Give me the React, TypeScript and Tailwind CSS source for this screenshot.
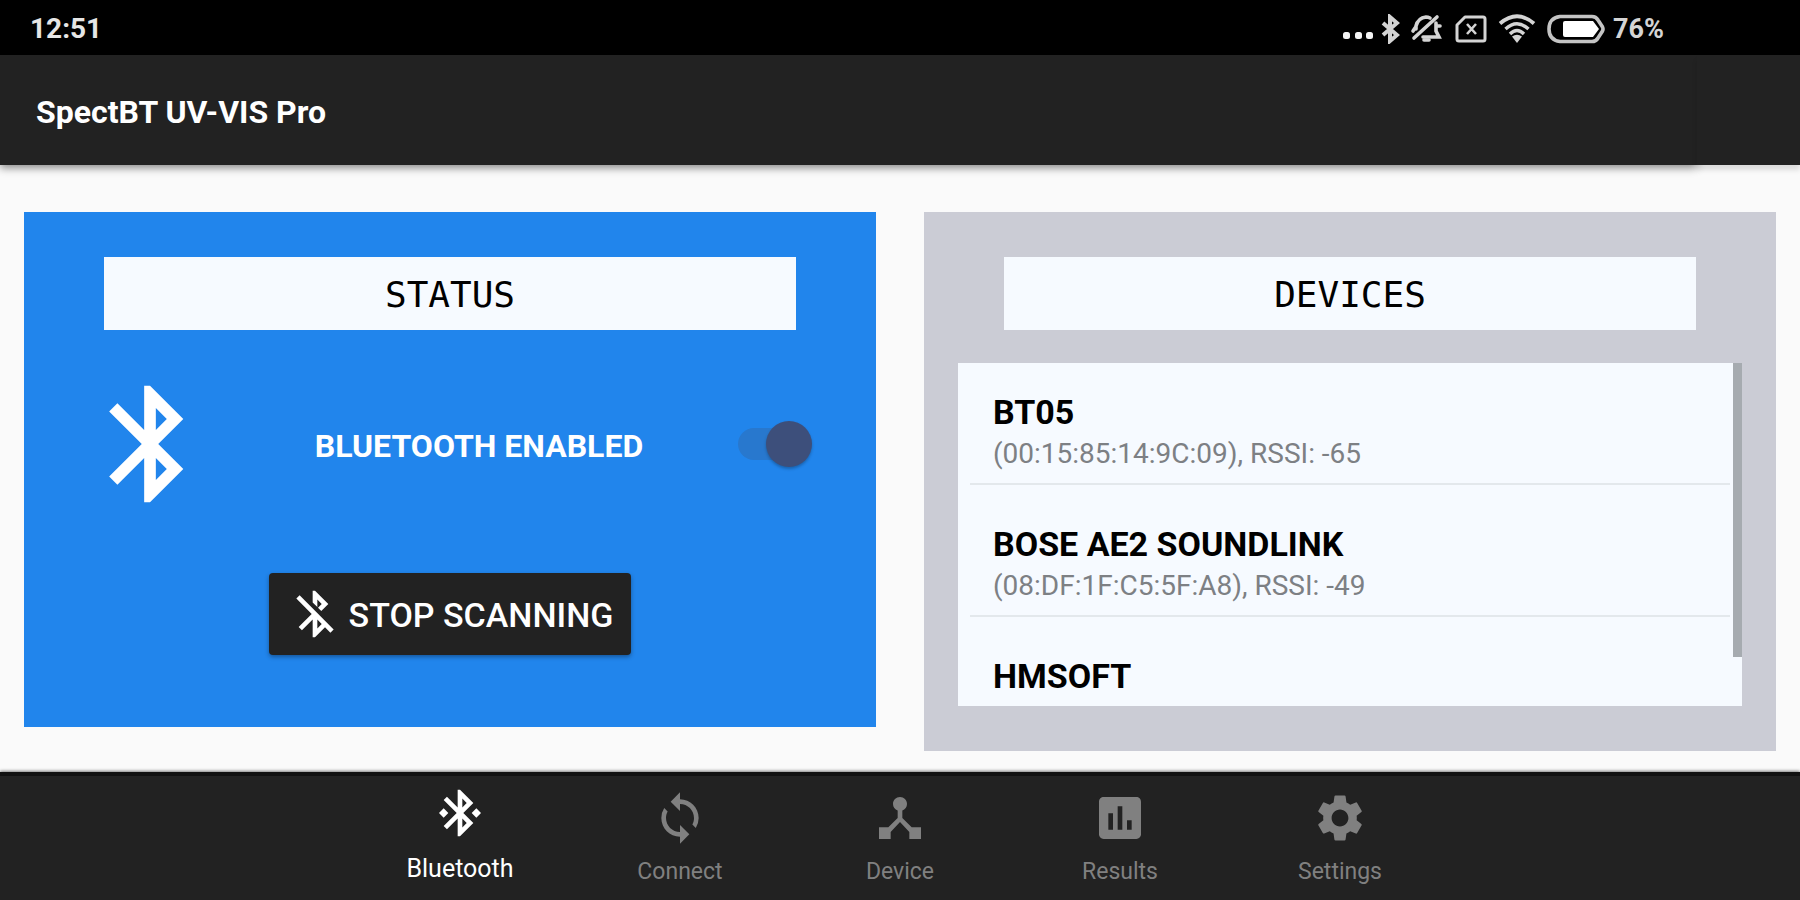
import { useState } from "react";
import type { ReactNode } from "react";
import type { IconType } from "react-icons";
import {
  MdAssessment,
  MdBluetooth,
  MdBluetoothConnected,
  MdBluetoothDisabled,
  MdDeviceHub,
  MdSettings,
  MdSync,
} from "react-icons/md";

type Device = { name: string; info?: string };

const devices: Device[] = [
  { name: "BT05", info: "(00:15:85:14:9C:09), RSSI: -65" },
  { name: "BOSE AE2 SOUNDLINK", info: "(08:DF:1F:C5:5F:A8), RSSI: -49" },
  { name: "HMSOFT" },
];

const tabs: { label: string; icon: IconType }[] = [
  { label: "Bluetooth", icon: MdBluetoothConnected },
  { label: "Connect", icon: MdSync },
  { label: "Device", icon: MdDeviceHub },
  { label: "Results", icon: MdAssessment },
  { label: "Settings", icon: MdSettings },
];

function StatusIcons() {
  return (
    <div className="flex items-center text-[#d4d4d4]">
      <svg className="mr-2 h-7 w-[30px]" viewBox="0 0 30 28" fill="#f4f4f4" aria-hidden="true">
        <rect x="0" y="17" width="7" height="7" rx="2.500" />
        <rect x="12" y="17" width="7" height="7" rx="2.500" />
        <rect x="23" y="17" width="7" height="7" rx="2.500" />
      </svg>
      <svg className="mr-[10px] h-[30px] w-[19px]" viewBox="0 0 19 30" fill="none" stroke="currentColor" strokeWidth="4" aria-hidden="true">
        <path d="M2 9 L16 21 L9 27 V3 L16 9 L2 21" />
      </svg>
      <svg className="mr-[13px] h-[30px] w-[32px]" viewBox="0 0 32 30" fill="none" stroke="currentColor" strokeWidth="3.6" strokeLinecap="round" aria-hidden="true">
        <path d="M4 24 L27 3" />
        <path d="M6 15 V12 Q8 4 16 3 Q18 3 20 4" />
        <path d="M26 9 V17 L29 23 H13" />
        <path d="M3 17 L5 14" />
        <path d="M27 12 H30" />
        <path d="M14 26 H19" />
      </svg>
      <svg className="mr-[11px] h-[30px] w-[32px]" viewBox="0 0 32 30" fill="none" stroke="currentColor" strokeWidth="3" aria-hidden="true">
        <path d="M10 3 H28 Q30 3 30 5 V25 Q30 27 28 27 H4 Q2 27 2 25 V11 Z" strokeLinejoin="round" />
        <path d="M12 10 L21 20 M21 10 L12 20" strokeWidth="2.6" />
      </svg>
      <svg className="mr-[11px] h-[30px] w-[38px]" viewBox="0 0 38 30" fill="none" stroke="currentColor" aria-hidden="true">
        <path d="M2 9.5 Q19 -5 36 9.5" strokeWidth="3.8" />
        <path d="M7.500 15 Q19 4.500 30.500 15" strokeWidth="3.4" />
        <path d="M12 20 Q19 13 26 20" strokeWidth="3.4" />
        <path d="M14 22.500 Q19 19 24 22.500 L19 29 Z" fill="currentColor" stroke="none" />
      </svg>
      <svg className="mr-2 h-[30px] w-[58px]" viewBox="0 0 58 30" aria-hidden="true">
        <path d="M13 2.500 H45 Q49 2.500 51 6 L55.500 13 Q56.500 15 55.500 17 L51 24 Q49 27.500 45 27.500 H13 Q2 26 2 15 Q2 4 13 2.500 Z" fill="none" stroke="#c4c4c4" strokeWidth="3.6" />
        <path d="M18 7 H46 L52 15 L46 23 H18 Q16 23 16 21 V9 Q16 7 18 7 Z" fill="#fff" />
      </svg>
      <span className="text-[27px] leading-8 font-bold">76%</span>
    </div>
  );
}

function PanelTitle({ children }: { children: ReactNode }) {
  return (
    <h2 className="mx-20 bg-[#f6faff] pt-[3px] text-center font-['DejaVu_Sans_Mono',monospace] text-[36px] leading-[70px] text-black">
      {children}
    </h2>
  );
}

function StatusPanel() {
  return (
    <section className="self-start bg-[#2185ec] pt-[45px] pb-[72px]">
      <PanelTitle>STATUS</PanelTitle>
      <div className="mt-11 mr-16 ml-14 flex items-center justify-between">
        <MdBluetooth className="size-[140px] text-white" aria-hidden="true" />
        <label htmlFor="bluetooth-switch" className="pt-[3px] text-[32px] leading-10 font-bold text-white">
          BLUETOOTH ENABLED
        </label>
        <span className="relative flex h-12 w-[74px] items-center">
          <input
            id="bluetooth-switch"
            type="checkbox"
            role="switch"
            defaultChecked
            disabled
            className="h-8 w-[66px] appearance-none rounded-full bg-[#2878ce]"
          />
          <span className="pointer-events-none absolute right-0 size-[46px] rounded-full bg-[#3d4f7b] shadow-[0_2px_3px_rgba(0,0,0,0.25)]" />
        </span>
      </div>
      <div className="mt-[59px] flex justify-center">
        <button
          type="button"
          className="flex h-[82px] items-center gap-[6px] rounded-[4px] bg-[#222222] px-[18px] text-[34px] leading-10 font-medium text-white shadow-[0_2px_4px_rgba(0,0,0,0.35)]"
        >
          <MdBluetoothDisabled className="size-14" aria-hidden="true" />
          <span className="pt-px">STOP SCANNING</span>
        </button>
      </div>
    </section>
  );
}

function DevicesPanel() {
  return (
    <section className="self-start bg-[#cbccd5] py-[45px]">
      <PanelTitle>DEVICES</PanelTitle>
      <div className="relative mx-[34px] mt-[33px] bg-[#f6faff]">
        <ul className="px-3">
          {devices.map((device) => (
            <li
              key={device.name}
              className="border-b-2 border-[#e3e8ec] pt-[39px] pb-[9px] pl-[23px] first:pt-[29px] last:border-b-0"
            >
              <p className="text-[34px] leading-[41px] font-bold text-black">{device.name}</p>
              {device.info && <p className="text-[28px] leading-[41px] text-[#7d8084]">{device.info}</p>}
            </li>
          ))}
        </ul>
        <div className="absolute top-0 right-0 h-[294px] w-[9px] bg-[#a6abb0]" />
      </div>
    </section>
  );
}

export default function App() {
  const [active, setActive] = useState("Bluetooth");
  return (
    <div className="flex min-h-screen flex-col bg-[#fafafa] font-[Roboto,sans-serif]">
      <div className="flex h-[55px] items-center justify-between bg-black pt-[3px] pr-[136px] pl-[30px]">
        <span className="text-[28px] leading-8 font-bold text-[#e6e6e6]">12:51</span>
        <StatusIcons />
      </div>
      <header className="flex h-[110px] bg-[#222222]">
        <div className="flex flex-1 items-center pt-[3px] pl-9 shadow-[0_3px_8px_rgba(0,0,0,0.45)]">
          <h1 className="text-[32px] leading-10 font-bold text-white">SpectBT UV-VIS Pro</h1>
        </div>
        <div className="w-[103px] bg-[#222222] shadow-[0_5px_5px_rgba(0,0,0,0.12)]" />
      </header>
      <main className="grid flex-1 grid-cols-2 gap-12 px-6 pt-[47px] pb-[21px]">
        <StatusPanel />
        <DevicesPanel />
      </main>
      <nav className="flex h-32 justify-center border-t-4 border-[#111111] bg-[#222222] shadow-[0_-1px_3px_rgba(0,0,0,0.5)]">
        {tabs.map(({ label, icon: Icon }) => {
          const selected = label === active;
          return (
            <button
              key={label}
              type="button"
              aria-current={selected ? "page" : undefined}
              onClick={() => setActive(label)}
              className={
                selected
                  ? "flex w-[220px] flex-col items-center gap-3 pt-[9px] text-[25px] leading-8 text-white"
                  : "flex w-[220px] flex-col items-center gap-3 pt-[14px] text-[23px] leading-7 text-[#808080]"
              }
            >
              <Icon className="size-14" aria-hidden="true" />
              <span>{label}</span>
            </button>
          );
        })}
      </nav>
    </div>
  );
}
